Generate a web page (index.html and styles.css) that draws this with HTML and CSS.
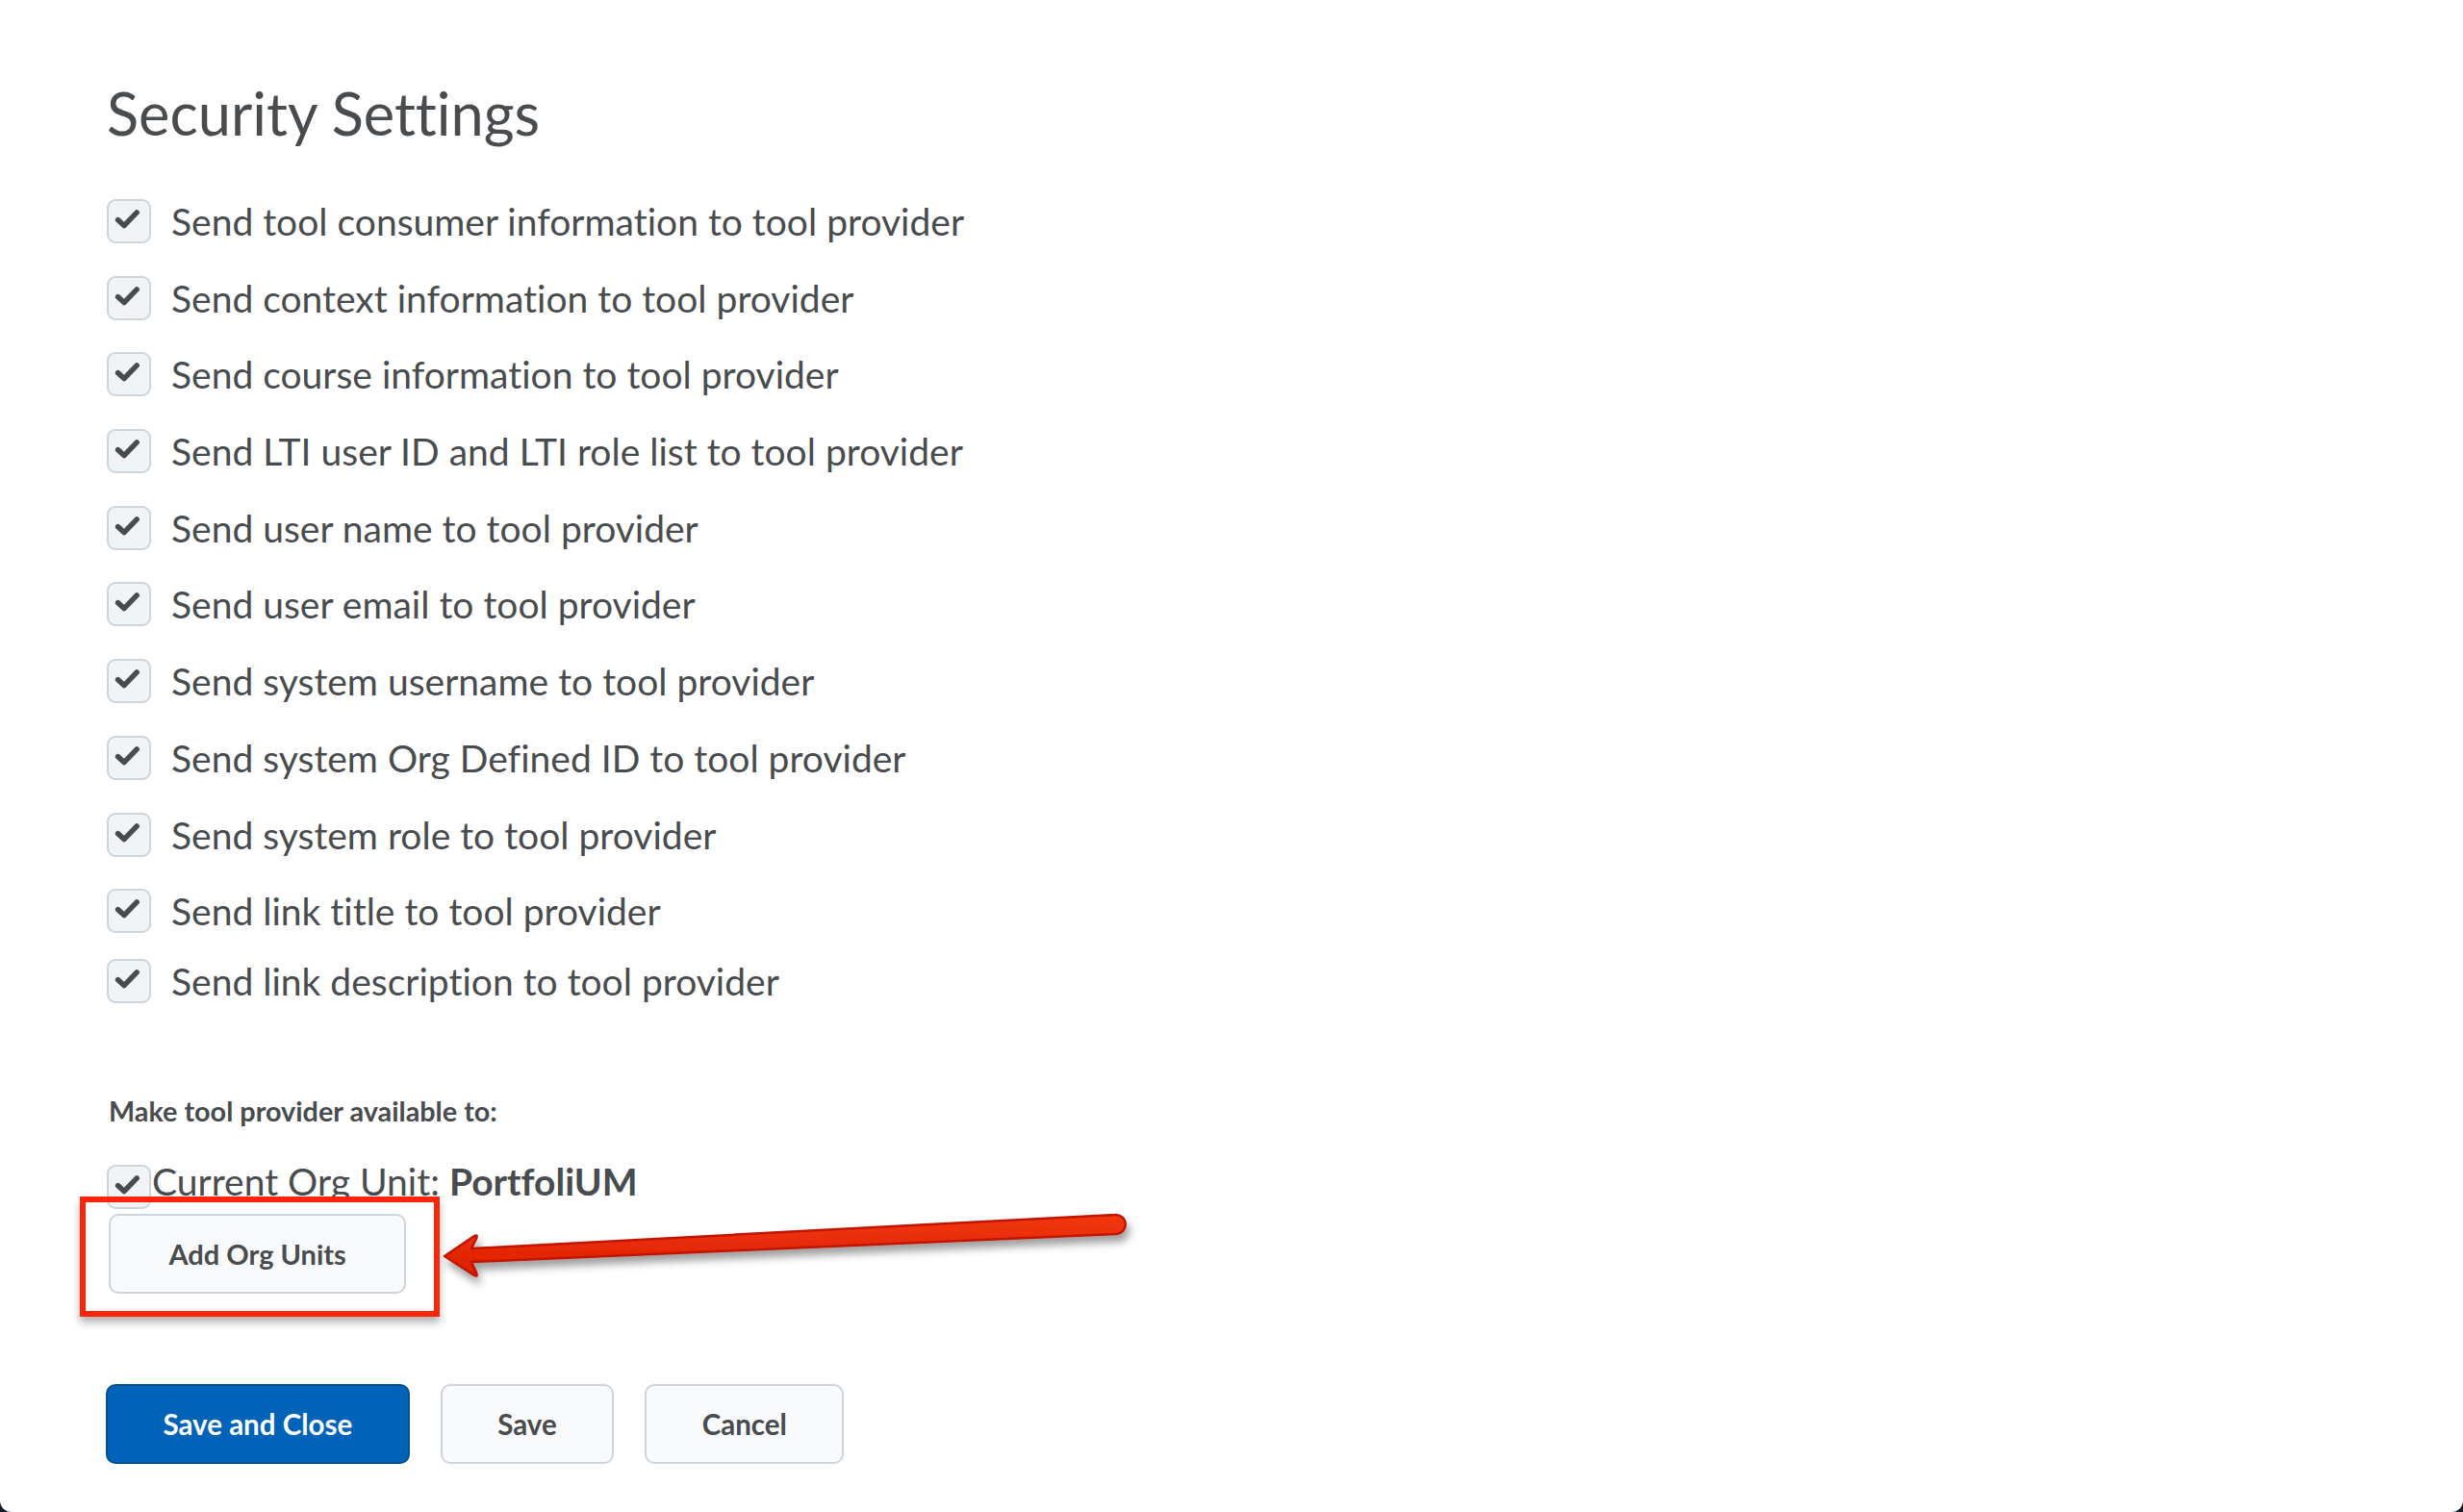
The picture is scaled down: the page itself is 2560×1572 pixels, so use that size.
FILE: index.html
```html
<!DOCTYPE html>
<html lang="en">
<head>
<meta charset="utf-8">
<title>Security Settings</title>
<link rel="stylesheet" href="styles.css">
</head>
<body>
<div class="window">
  <main class="page">
    <h1 class="title">Security Settings</h1>
    <ul class="checks">
      <li class="check-row"><span class="box"><svg viewBox="0 0 46 46"><path d="M12.5 23.5 L19.5 30 L34 15"/></svg></span><span class="label">Send tool consumer information to tool provider</span></li>
      <li class="check-row"><span class="box"><svg viewBox="0 0 46 46"><path d="M12.5 23.5 L19.5 30 L34 15"/></svg></span><span class="label">Send context information to tool provider</span></li>
      <li class="check-row"><span class="box"><svg viewBox="0 0 46 46"><path d="M12.5 23.5 L19.5 30 L34 15"/></svg></span><span class="label">Send course information to tool provider</span></li>
      <li class="check-row"><span class="box"><svg viewBox="0 0 46 46"><path d="M12.5 23.5 L19.5 30 L34 15"/></svg></span><span class="label">Send LTI user ID and LTI role list to tool provider</span></li>
      <li class="check-row"><span class="box"><svg viewBox="0 0 46 46"><path d="M12.5 23.5 L19.5 30 L34 15"/></svg></span><span class="label">Send user name to tool provider</span></li>
      <li class="check-row"><span class="box"><svg viewBox="0 0 46 46"><path d="M12.5 23.5 L19.5 30 L34 15"/></svg></span><span class="label">Send user email to tool provider</span></li>
      <li class="check-row"><span class="box"><svg viewBox="0 0 46 46"><path d="M12.5 23.5 L19.5 30 L34 15"/></svg></span><span class="label">Send system username to tool provider</span></li>
      <li class="check-row"><span class="box"><svg viewBox="0 0 46 46"><path d="M12.5 23.5 L19.5 30 L34 15"/></svg></span><span class="label">Send system Org Defined ID to tool provider</span></li>
      <li class="check-row"><span class="box"><svg viewBox="0 0 46 46"><path d="M12.5 23.5 L19.5 30 L34 15"/></svg></span><span class="label">Send system role to tool provider</span></li>
      <li class="check-row"><span class="box"><svg viewBox="0 0 46 46"><path d="M12.5 23.5 L19.5 30 L34 15"/></svg></span><span class="label">Send link title to tool provider</span></li>
      <li class="check-row last"><span class="box"><svg viewBox="0 0 46 46"><path d="M12.5 23.5 L19.5 30 L34 15"/></svg></span><span class="label">Send link description to tool provider</span></li>
    </ul>

    <div class="avail-label">Make tool provider available to:</div>

    <div class="org-row"><span class="box"><svg viewBox="0 0 46 46"><path d="M12.5 23.5 L19.5 30 L34 15"/></svg></span><span class="org-text">Current Org Unit: <b>PortfoliUM</b></span></div>

    <div class="org-actions">
      <span class="highlight"></span>
      <button class="btn btn-add" type="button">Add Org Units</button>
    </div>

    <div class="footer-buttons">
      <button class="btn btn-primary" type="button">Save and Close</button>
      <button class="btn" type="button">Save</button>
      <button class="btn" type="button">Cancel</button>
    </div>
  </main>

  <svg class="arrow" viewBox="0 0 760 110" width="760" height="110">
    <defs>
      <filter id="shadow" x="-5%" y="-40%" width="115%" height="200%">
        <feDropShadow dx="3" dy="7" stdDeviation="4" flood-color="#000" flood-opacity="0.38"/>
      </filter>
      <linearGradient id="redfill" x1="0" y1="0" x2="0" y2="1">
        <stop offset="0" stop-color="#f2380f"/>
        <stop offset="1" stop-color="#dc1d00"/>
      </linearGradient>
    </defs>
    <path filter="url(#shadow)" fill="url(#redfill)" stroke="#c01500" stroke-width="2.5" stroke-linejoin="round"
      d="M22 66 L53 45 Q57 43 55 48 L50 58 L719 23 A10 10 0 0 1 720.5 43 L50 72 L55 83 Q57 88 53 86 Z"/>
  </svg>
</div>
</body>
</html>
```

FILE: styles.css
```css
* { box-sizing: border-box; }

html, body {
  margin: 0;
  padding: 0;
  background: #161a24;
}

.window {
  position: relative;
  width: 2560px;
  height: 1572px;
  background: #ffffff;
  border-radius: 0 0 12px 12px;
  overflow: hidden;
  font-family: Lato, "Liberation Sans", sans-serif;
  font-variant-ligatures: no-common-ligatures;
  color: #494c4e;
}

.page {
  padding: 0 0 0 111px;
}

.title {
  margin: 81px 0 0;
  font-size: 61.3px;
  line-height: 72px;
  font-weight: 400;
  color: #494c4e;
}

.checks {
  list-style: none;
  margin: 54px 0 0;
  padding: 0;
}

.check-row {
  display: flex;
  align-items: center;
  height: 46px;
  margin-bottom: 33.7px;
}

.check-row.last {
  margin-top: -7px;
  margin-bottom: 0;
}

.box {
  flex: none;
  width: 46px;
  height: 46px;
  border: 2px solid #cdd5dc;
  border-radius: 9px;
  background: #f1f3f6;
  display: flex;
}

.box svg {
  width: 42px;
  height: 42px;
}

.box path {
  fill: none;
  stroke: #494c4e;
  stroke-width: 6;
  stroke-linecap: round;
  stroke-linejoin: round;
  transform: translate(-2px, -2px);
}

.label {
  margin-left: 21px;
  font-size: 39px;
  line-height: 46px;
  white-space: nowrap;
}

.avail-label {
  margin: 95px 0 0 2px;
  font-size: 28.8px;
  line-height: 34px;
  font-weight: 700;
}

.org-row {
  display: flex;
  align-items: flex-start;
  margin-top: 39px;
}

.org-text {
  margin-left: 1px;
  font-size: 39px;
  line-height: 34px;
  white-space: nowrap;
}

.org-text b {
  font-weight: 700;
}

.org-actions {
  position: relative;
  margin-top: 5px;
  display: flex;
}

.highlight {
  position: absolute;
  left: -28px;
  top: -18px;
  width: 374px;
  height: 125px;
  border: 6px solid #fb250c;
  box-shadow: 0 6px 8px rgba(0, 0, 0, 0.3);
  pointer-events: none;
}

.btn {
  height: 83px;
  padding: 0 57.5px;
  border: 2px solid #cdd5dc;
  border-radius: 10px;
  background: #f9fafb;
  color: #494c4e;
  font-family: Lato, "Liberation Sans", sans-serif;
  font-variant-ligatures: no-common-ligatures;
  font-size: 29.5px;
  font-weight: 700;
  line-height: 1;
  cursor: pointer;
}

.btn-add {
  position: relative;
  margin-left: 2px;
  padding: 0 60.5px;
  font-size: 29px;
}

.footer-buttons {
  display: flex;
  gap: 32px;
  margin-top: 94px;
  margin-left: -1px;
}

.btn-primary {
  background: #0063b7;
  border-color: #004f93;
  color: #ffffff;
}

.arrow {
  position: absolute;
  left: 440px;
  top: 1240px;
  overflow: visible;
}
```
